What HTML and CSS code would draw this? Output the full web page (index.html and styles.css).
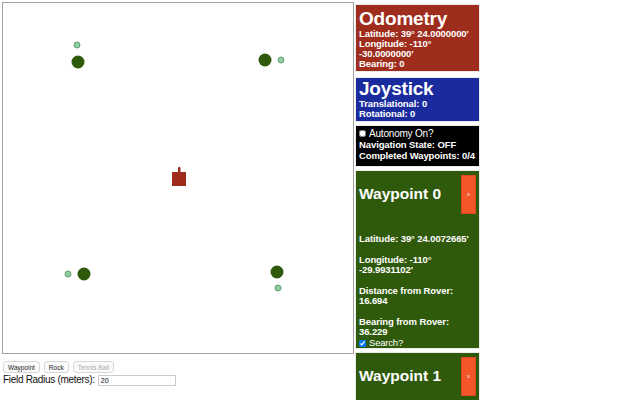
FILE: index.html
```html
<!DOCTYPE html>
<html>
<head>
<meta charset="utf-8">
<link rel="stylesheet" href="styles.css">
</head>
<body>
<div class="app">
  <div class="left">
    <div class="field">
      <svg class="map" width="350" height="350" viewBox="0 0 350 350">
        <circle cx="74" cy="42" r="3" fill="#8fcf9f" stroke="#5f9f6f" stroke-width="1"/>
        <circle cx="75" cy="59" r="6.5" fill="#2f5a0c"/>
        <circle cx="262" cy="57" r="6.5" fill="#2f5a0c"/>
        <circle cx="278" cy="57" r="3" fill="#8fcf9f" stroke="#5f9f6f" stroke-width="1"/>
        <circle cx="65" cy="271" r="3" fill="#8fcf9f" stroke="#5f9f6f" stroke-width="1"/>
        <circle cx="81" cy="271" r="6.5" fill="#2f5a0c"/>
        <circle cx="274" cy="269" r="6.5" fill="#2f5a0c"/>
        <circle cx="275" cy="285" r="3" fill="#8fcf9f" stroke="#5f9f6f" stroke-width="1"/>
        <rect x="169" y="169" width="14" height="14" fill="#9e2b1c"/>
        <rect x="175" y="164" width="2.5" height="6" rx="1" fill="#9e2b1c"/>
      </svg>
    </div>
    <div class="tools">
      <button class="tool">Waypoint</button>
      <button class="tool">Rock</button>
      <button class="tool" disabled>Tennis Ball</button>
    </div>
    <div class="radius">
      <label>Field Radius (meters):</label>
      <input class="radius-input" type="text" value="20">
    </div>
  </div>
  <div class="right">
    <div class="panel odom">
      <h2>Odometry</h2>
      <div class="info">Latitude: 39° 24.0000000'</div>
      <div class="info">Longitude: -110°<br>-30.0000000'</div>
      <div class="info">Bearing: 0</div>
    </div>
    <div class="panel joy">
      <h2>Joystick</h2>
      <div class="info">Translational: 0</div>
      <div class="info">Rotational: 0</div>
    </div>
    <div class="panel auto">
      <div class="auto-row"><input type="checkbox" class="box"><span class="plain">Autonomy On?</span></div>
      <div class="info">Navigation State: OFF</div>
      <div class="info">Completed Waypoints: 0/4</div>
    </div>
    <div class="panel wp">
      <div class="wp-head">
        <h2>Waypoint 0</h2>
        <button class="close">x</button>
      </div>
      <p>Latitude: 39° 24.0072665'</p>
      <p>Longitude: -110°<br>-29.9931102'</p>
      <p>Distance from Rover:<br>16.694</p>
      <p>Bearing from Rover:<br>36.229</p>
      <div class="search"><input type="checkbox" class="box" checked><span class="plain">Search?</span></div>
    </div>
    <div class="panel wp">
      <div class="wp-head">
        <h2>Waypoint 1</h2>
        <button class="close">x</button>
      </div>
    </div>
  </div>
</div>
</body>
</html>
```
FILE: styles.css
```css
html, body {
  margin: 0;
  padding: 0;
  background: #fff;
  font-family: "Liberation Sans", Arial, sans-serif;
  overflow: hidden;
}
.app {
  display: flex;
  align-items: flex-start;
  gap: 2px;
  padding: 2px 0 0 2px;
}
.left {
  width: 352px;
  display: flex;
  flex-direction: column;
}
.field {
  width: 350px;
  height: 350px;
  border: 1px solid #a0a0a0;
}
.map { display: block; }
.tools {
  display: flex;
  gap: 4px;
  margin-top: 7px;
  padding-left: 1px;
}
.tool {
  font-family: "Liberation Sans", Arial, sans-serif;
  font-size: 6.5px;
  height: 12px;
  padding: 0 4px;
  border: 1px solid #d8d8d8;
  border-radius: 3px;
  background: #fafafa;
  color: #222;
}
.tool:disabled { color: #aaa; }
.radius {
  display: flex;
  align-items: center;
  gap: 3px;
  margin-top: 1px;
  padding-left: 1px;
  font-size: 10px;
  line-height: 12px;
  letter-spacing: -0.3px;
  color: #111;
}
.radius-input {
  width: 72px;
  height: 9px;
  font-size: 7px;
  padding: 0 2px;
  border: 1px solid #ccc;
  letter-spacing: 0;
  font-family: "Liberation Sans", Arial, sans-serif;
}
.right {
  width: 123px;
  display: flex;
  flex-direction: column;
  gap: 5px;
  padding-top: 3px;
}
.panel {
  color: #fff;
  padding: 3px 3px 2px 3px;
  box-shadow: 0 0 0 1px rgba(0,0,0,0.08);
}
.panel h2 {
  margin: 0;
  font-size: 19px;
  line-height: 21px;
  font-weight: bold;
  letter-spacing: -0.2px;
}
.info {
  font-size: 9.5px;
  font-weight: bold;
  line-height: 10px;
  letter-spacing: -0.1px;
}
.odom { background: #9f2d1d; margin-bottom: 2px; }
.joy { background: #1a2c9d; padding-top: 0; padding-bottom: 2px; }
.auto { background: #000; padding-top: 2px; padding-bottom: 5px; }
.auto .info { line-height: 11px; }
.auto-row, .search {
  display: flex;
  align-items: center;
  gap: 3px;
  font-size: 10px;
  line-height: 11px;
}
.plain { font-weight: normal; letter-spacing: -0.2px; }
.box {
  margin: 0;
  width: 7px;
  height: 7px;
}
.wp { background: #2f5a0b; padding-bottom: 4px; }
.wp-head {
  display: flex;
  justify-content: space-between;
  align-items: center;
  height: 40px;
}
.wp-head h2 { font-size: 15.5px; line-height: 18px; letter-spacing: 0; }
.close {
  width: 15px;
  height: 39px;
  background: #f4562a;
  border: 1px solid #d84a20;
  color: #fff;
  font-size: 5px;
  padding: 0;
  margin-right: 0;
}
.wp p {
  margin: 11px 0 0;
  font-size: 9.5px;
  font-weight: bold;
  line-height: 10px;
  letter-spacing: -0.1px;
}
.wp p:first-of-type { margin-top: 20px; }
.search { margin-top: 2px; font-size: 9.5px; line-height: 8px; height: 8px; }
.wp:has(.search) { padding-bottom: 1px; }
```
